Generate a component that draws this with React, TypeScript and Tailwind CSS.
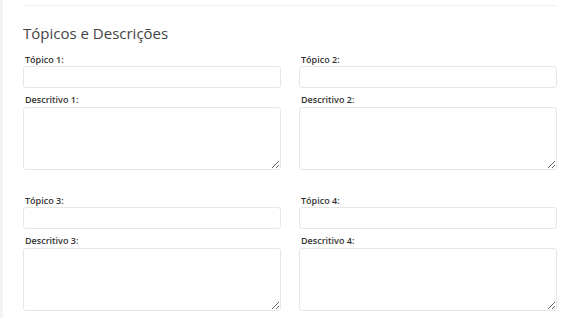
import React from 'react';

const pairs = [
  [1, 2],
  [3, 4],
];

function Field({ n }: { n: number }) {
  return (
    <div className="flex flex-col">
      <label className="pl-[2px] text-[9px] font-semibold leading-[12px] text-[#333]">
        Tópico {n}:
      </label>
      <input
        type="text"
        className="h-[22px] w-full rounded-[3px] border border-[#e6e6e6] bg-white"
      />
      <label className="mt-[6px] pl-[2px] text-[9px] font-semibold leading-[12px] text-[#333]">
        Descritivo {n}:
      </label>
      <textarea className="mt-[1px] h-[63px] w-full resize-y rounded-[3px] border border-[#e6e6e6] bg-white" />
    </div>
  );
}

export default function App() {
  return (
    <div
      className="min-h-[318px] w-[566px] border-l-[3px] border-[#f4f4f4] bg-white"
      style={{ fontFamily: '"Open Sans", sans-serif' }}
    >
      <div className="pl-[20px] pr-[9px] pt-[5px]">
        <div className="h-px bg-[#f2f2f2]" />
        <h2 className="mt-[16px] text-[15px] leading-[22px] text-[#444]">
          Tópicos e Descrições
        </h2>
        <div className="mt-[10px] flex flex-col gap-[25px]">
          {pairs.map(([a, b]) => (
            <div key={a} className="grid grid-cols-2 gap-x-[18px]">
              <Field n={a} />
              <Field n={b} />
            </div>
          ))}
        </div>
      </div>
    </div>
  );
}
